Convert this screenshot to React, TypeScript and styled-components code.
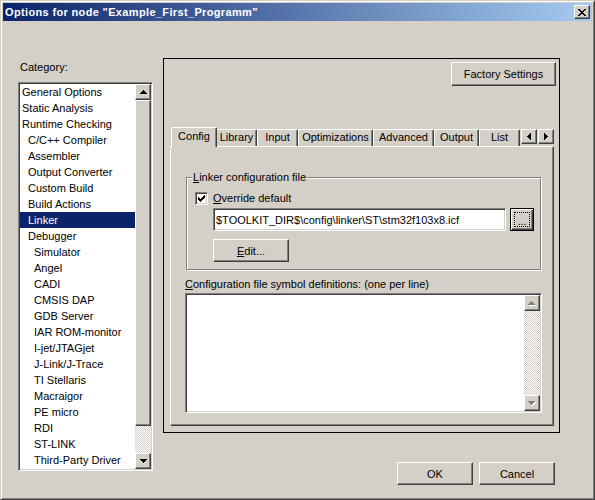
import React, { useState } from 'react';
import styled, { createGlobalStyle, css } from 'styled-components';

const GlobalStyle = createGlobalStyle`
  html, body {
    margin: 0;
    padding: 0;
    background: #d4d0c8;
  }
  body {
    font-family: "Liberation Sans", Arial, sans-serif;
    font-size: 11px;
    color: #000;
  }
  * {
    box-sizing: border-box;
  }
`;

const raised = css`
  background: #d4d0c8;
  border: 1px solid;
  border-color: #fff #404040 #404040 #fff;
  box-shadow: inset -1px -1px 0 #808080;
`;

const sunken = css`
  border: 1px solid;
  border-color: #808080 #fff #fff #808080;
  box-shadow: inset 1px 1px 0 #404040, inset -1px -1px 0 #d4d0c8;
  padding: 1px;
`;

const checkered = css`
  background-color: #fff;
  background-image: repeating-conic-gradient(#d4d0c8 0% 25%, #fff 0% 50%);
  background-size: 2px 2px;
`;

const Window = styled.div`
  width: 595px;
  height: 500px;
  display: flex;
  flex-direction: column;
  padding: 2px;
  background: #d4d0c8;
  border: 1px solid;
  border-color: #d4d0c8 #404040 #404040 #d4d0c8;
  box-shadow: inset 1px 1px 0 #fff, inset -1px -1px 0 #808080;
`;

const TitleBar = styled.div`
  height: 18px;
  display: flex;
  align-items: center;
  padding-left: 2px;
  background: linear-gradient(to right, #0a246a, #a6caf0);
  color: #fff;
  font-weight: bold;
  font-size: 11px;
  letter-spacing: 0.35px;
  white-space: nowrap;
`;

const CloseButton = styled.div`
  ${raised};
  width: 16px;
  height: 14px;
  margin-left: auto;
  margin-right: 2px;
  display: flex;
  align-items: center;
  justify-content: center;
`;

const Client = styled.div`
  flex: 1;
  display: grid;
  grid-template-columns: 135px 397px;
  grid-template-rows: 375px auto;
  column-gap: 10px;
  align-content: start;
  padding: 37px 0 0 15px;
`;

const LeftColumn = styled.div`
  grid-row: 1 / span 2;
  display: flex;
  flex-direction: column;
`;

const FieldLabel = styled.div<{ $indent?: number }>`
  line-height: 13px;
  white-space: nowrap;
  margin-left: ${(p) => p.$indent ?? 0}px;
`;

const CategoryLabel = styled(FieldLabel)`
  margin-top: 3px;
  margin-bottom: 8px;
`;

const ListBox = styled.div`
  ${sunken};
  height: 389px;
  background: #fff;
  display: flex;
`;

const Items = styled.div`
  flex: 1;
  overflow: hidden;
  display: flex;
  flex-direction: column;
`;

const ListItem = styled.div<{ $level: number; $selected: boolean }>`
  height: 16px;
  flex-shrink: 0;
  line-height: 16px;
  padding-left: ${(p) => 2 + p.$level * 6}px;
  white-space: nowrap;
  cursor: default;
  background: ${(p) => (p.$selected ? '#0a246a' : 'transparent')};
  color: ${(p) => (p.$selected ? '#fff' : '#000')};
`;

const ScrollBar = styled.div`
  width: 16px;
  flex-shrink: 0;
  display: flex;
  flex-direction: column;
  ${checkered};
`;

const ScrollArrow = styled.div`
  ${raised};
  height: 16px;
  flex-shrink: 0;
  display: flex;
  align-items: center;
  justify-content: center;
`;

const Thumb = styled.div<{ $size: number }>`
  ${raised};
  height: ${(p) => p.$size}px;
  flex-shrink: 0;
`;

const Track = styled.div`
  flex: 1;
`;

const Panel = styled.div`
  grid-column: 2;
  grid-row: 1;
  border: 1px solid #000;
  display: flex;
  flex-direction: column;
`;

const TopRow = styled.div`
  display: flex;
  justify-content: flex-end;
  padding: 3px 3px 0 0;
`;

const Button = styled.button<{ $w: number; $h?: number }>`
  ${raised};
  display: block;
  width: ${(p) => p.$w}px;
  height: ${(p) => p.$h ?? 23}px;
  padding: 0;
  font-family: inherit;
  font-size: 11px;
  color: #000;
  border-radius: 0;
  cursor: default;
`;

const TabControl = styled.div`
  flex: 1;
  margin: 41px 5px 6px 6px;
  display: flex;
  flex-direction: column;
`;

const TabStrip = styled.div`
  height: 19px;
  display: flex;
  align-items: flex-end;
  padding-left: 3px;
`;

const Tab = styled.div<{ $w: number; $active: boolean }>`
  width: ${(p) => p.$w}px;
  flex-shrink: 0;
  background: #d4d0c8;
  border-top: 1px solid #fff;
  border-left: 1px solid #fff;
  border-right: 1px solid #404040;
  box-shadow: inset -1px 0 0 #808080;
  border-radius: 2px 2px 0 0;
  text-align: center;
  white-space: nowrap;
  cursor: default;
  ${(p) =>
    p.$active
      ? css`
          height: 20px;
          line-height: 17px;
          margin: 0 -1px -1px -2px;
          position: relative;
          z-index: 1;
        `
      : css`
          height: 17px;
          line-height: 15px;
        `}
`;

const TabArrows = styled.div`
  display: flex;
  gap: 1px;
  margin-left: auto;
  align-self: flex-start;
  margin-top: 2px;
`;

const TabArrow = styled.div`
  ${raised};
  width: 16px;
  height: 15px;
  display: flex;
  align-items: center;
  justify-content: center;
`;

const TabPage = styled.div`
  flex: 1;
  border: 1px solid;
  border-color: #fff #404040 #404040 #fff;
  box-shadow: inset -1px -1px 0 #808080;
`;

const GroupBox = styled.div`
  margin: 30px 12px 0 15px;
  padding-bottom: 7px;
  border: 1px solid #808080;
  box-shadow: inset 1px 1px 0 #fff, 1px 1px 0 #fff;
`;

const Legend = styled.div`
  display: table;
  margin: -7px 0 0 5px;
  padding: 0 1px;
  line-height: 13px;
  background: #d4d0c8;
  white-space: nowrap;
`;

const CheckRow = styled.label`
  display: flex;
  align-items: center;
  gap: 5px;
  height: 13px;
  margin: 8px 0 0 8px;
  line-height: 13px;
`;

const CheckBox = styled.div`
  ${sunken};
  width: 13px;
  height: 13px;
  background: #fff;
  display: flex;
  align-items: center;
  justify-content: center;
`;

const FileRow = styled.div`
  display: flex;
  gap: 4px;
  margin: 3px 0 0 26px;
`;

const PathInput = styled.input`
  ${sunken};
  width: 293px;
  height: 23px;
  padding: 1px 1px 1px 2px;
  background: #fff;
  font-family: inherit;
  font-size: 11px;
  color: #000;
  outline: none;
  border-radius: 0;
`;

const BrowseButton = styled.button`
  width: 24px;
  height: 23px;
  padding: 3px;
  background: #d4d0c8;
  border: 1px solid #000;
  box-shadow: inset 1px 1px 0 #fff, inset -1px -1px 0 #404040, inset -2px -2px 0 #808080;
  display: flex;
  align-items: stretch;
  justify-content: stretch;
  border-radius: 0;
  cursor: default;
`;

const FocusRect = styled.span`
  flex: 1;
  border: 1px dotted #000;
  display: flex;
  align-items: flex-end;
  justify-content: center;
  font-family: inherit;
  font-size: 11px;
  line-height: 9px;
  letter-spacing: 0;
`;

const EditButton = styled(Button)`
  margin: 8px 0 0 26px;
`;

const SymLabel = styled(FieldLabel)`
  margin-top: 8px;
`;

const SymBox = styled.div`
  ${sunken};
  margin: 2px 0 0 14px;
  width: 357px;
  height: 120px;
  background: #fff;
  display: flex;
  justify-content: flex-end;
`;

const Footer = styled.div`
  grid-column: 2;
  grid-row: 2;
  display: flex;
  justify-content: flex-end;
  gap: 6px;
  margin-top: 29px;
  padding-right: 5px;
`;

type GlyphProps = { rows: string[]; color?: string; disabled?: boolean };

const PixelGlyph: React.FC<GlyphProps> = ({ rows, color = '#000', disabled }) => {
  const w = rows[0].length;
  const h = rows.length;
  const rects: { x: number; y: number }[] = [];
  rows.forEach((row, y) =>
    row.split('').forEach((c, x) => {
      if (c === '#') rects.push({ x, y });
    })
  );
  const pad = disabled ? 1 : 0;
  return (
    <svg width={w + pad} height={h + pad} viewBox={`0 0 ${w + pad} ${h + pad}`} shapeRendering="crispEdges">
      {disabled &&
        rects.map((r) => <rect key={`s${r.x}-${r.y}`} x={r.x + 1} y={r.y + 1} width={1} height={1} fill="#fff" />)}
      {rects.map((r) => (
        <rect key={`${r.x}-${r.y}`} x={r.x} y={r.y} width={1} height={1} fill={disabled ? '#808080' : color} />
      ))}
    </svg>
  );
};

const glyphs = {
  close: ['##....##', '.##..##.', '..####..', '...##...', '..####..', '.##..##.', '##....##'],
  check: ['......#', '.....##', '#...###', '##.###.', '#####..', '.###...', '..#....'],
  up: ['...#...', '..###..', '.#####.', '#######'],
  down: ['#######', '.#####.', '..###..', '...#...'],
  left: ['...#', '..##', '.###', '####', '.###', '..##', '...#'],
  right: ['#...', '##..', '###.', '####', '###.', '##..', '#...'],
};

const categories: { label: string; level: number }[] = [
  { label: 'General Options', level: 0 },
  { label: 'Static Analysis', level: 0 },
  { label: 'Runtime Checking', level: 0 },
  { label: 'C/C++ Compiler', level: 1 },
  { label: 'Assembler', level: 1 },
  { label: 'Output Converter', level: 1 },
  { label: 'Custom Build', level: 1 },
  { label: 'Build Actions', level: 1 },
  { label: 'Linker', level: 1 },
  { label: 'Debugger', level: 1 },
  { label: 'Simulator', level: 2 },
  { label: 'Angel', level: 2 },
  { label: 'CADI', level: 2 },
  { label: 'CMSIS DAP', level: 2 },
  { label: 'GDB Server', level: 2 },
  { label: 'IAR ROM-monitor', level: 2 },
  { label: 'I-jet/JTAGjet', level: 2 },
  { label: 'J-Link/J-Trace', level: 2 },
  { label: 'TI Stellaris', level: 2 },
  { label: 'Macraigor', level: 2 },
  { label: 'PE micro', level: 2 },
  { label: 'RDI', level: 2 },
  { label: 'ST-LINK', level: 2 },
  { label: 'Third-Party Driver', level: 2 },
];

const tabs: { label: string; width: number }[] = [
  { label: 'Config', width: 46 },
  { label: 'Library', width: 41 },
  { label: 'Input', width: 41 },
  { label: 'Optimizations', width: 75 },
  { label: 'Advanced', width: 61 },
  { label: 'Output', width: 45 },
  { label: 'List', width: 41 },
];

const App: React.FC = () => {
  const [selected, setSelected] = useState('Linker');
  const [activeTab, setActiveTab] = useState('Config');
  const [override, setOverride] = useState(true);

  return (
    <>
      <GlobalStyle />
      <Window>
        <TitleBar>
          Options for node "Example_First_Programm"
          <CloseButton>
            <PixelGlyph rows={glyphs.close} />
          </CloseButton>
        </TitleBar>
        <Client>
          <LeftColumn>
            <CategoryLabel $indent={2}>Category:</CategoryLabel>
            <ListBox>
              <Items>
                {categories.map((c) => (
                  <ListItem
                    key={c.label}
                    $level={c.level}
                    $selected={c.label === selected}
                    onClick={() => setSelected(c.label)}
                  >
                    {c.label}
                  </ListItem>
                ))}
              </Items>
              <ScrollBar>
                <ScrollArrow>
                  <PixelGlyph rows={glyphs.up} />
                </ScrollArrow>
                <Thumb $size={326} />
                <Track />
                <ScrollArrow>
                  <PixelGlyph rows={glyphs.down} />
                </ScrollArrow>
              </ScrollBar>
            </ListBox>
          </LeftColumn>

          <Panel>
            <TopRow>
              <Button $w={105} $h={24}>Factory Settings</Button>
            </TopRow>
            <TabControl>
              <TabStrip>
                {tabs.map((t) => (
                  <Tab
                    key={t.label}
                    $w={t.width}
                    $active={t.label === activeTab}
                    onClick={() => setActiveTab(t.label)}
                  >
                    {t.label}
                  </Tab>
                ))}
                <TabArrows>
                  <TabArrow>
                    <PixelGlyph rows={glyphs.left} />
                  </TabArrow>
                  <TabArrow>
                    <PixelGlyph rows={glyphs.right} />
                  </TabArrow>
                </TabArrows>
              </TabStrip>
              <TabPage>
                <GroupBox>
                  <Legend>
                    <u>L</u>inker configuration file
                  </Legend>
                  <CheckRow onClick={() => setOverride(!override)}>
                    <CheckBox>{override && <PixelGlyph rows={glyphs.check} />}</CheckBox>
                    <span>
                      <u>O</u>verride default
                    </span>
                  </CheckRow>
                  <FileRow>
                    <PathInput readOnly value="$TOOLKIT_DIR$\config\linker\ST\stm32f103x8.icf" />
                    <BrowseButton>
                      <FocusRect>...</FocusRect>
                    </BrowseButton>
                  </FileRow>
                  <EditButton $w={76}>
                    <u>E</u>dit...
                  </EditButton>
                </GroupBox>
                <SymLabel $indent={14}>
                  <u>C</u>onfiguration file symbol definitions: (one per line)
                </SymLabel>
                <SymBox>
                  <ScrollBar>
                    <ScrollArrow>
                      <PixelGlyph rows={glyphs.up} disabled />
                    </ScrollArrow>
                    <Track />
                    <ScrollArrow>
                      <PixelGlyph rows={glyphs.down} disabled />
                    </ScrollArrow>
                  </ScrollBar>
                </SymBox>
              </TabPage>
            </TabControl>
          </Panel>

          <Footer>
            <Button $w={76}>OK</Button>
            <Button $w={76}>Cancel</Button>
          </Footer>
        </Client>
      </Window>
    </>
  );
};

export default App;
